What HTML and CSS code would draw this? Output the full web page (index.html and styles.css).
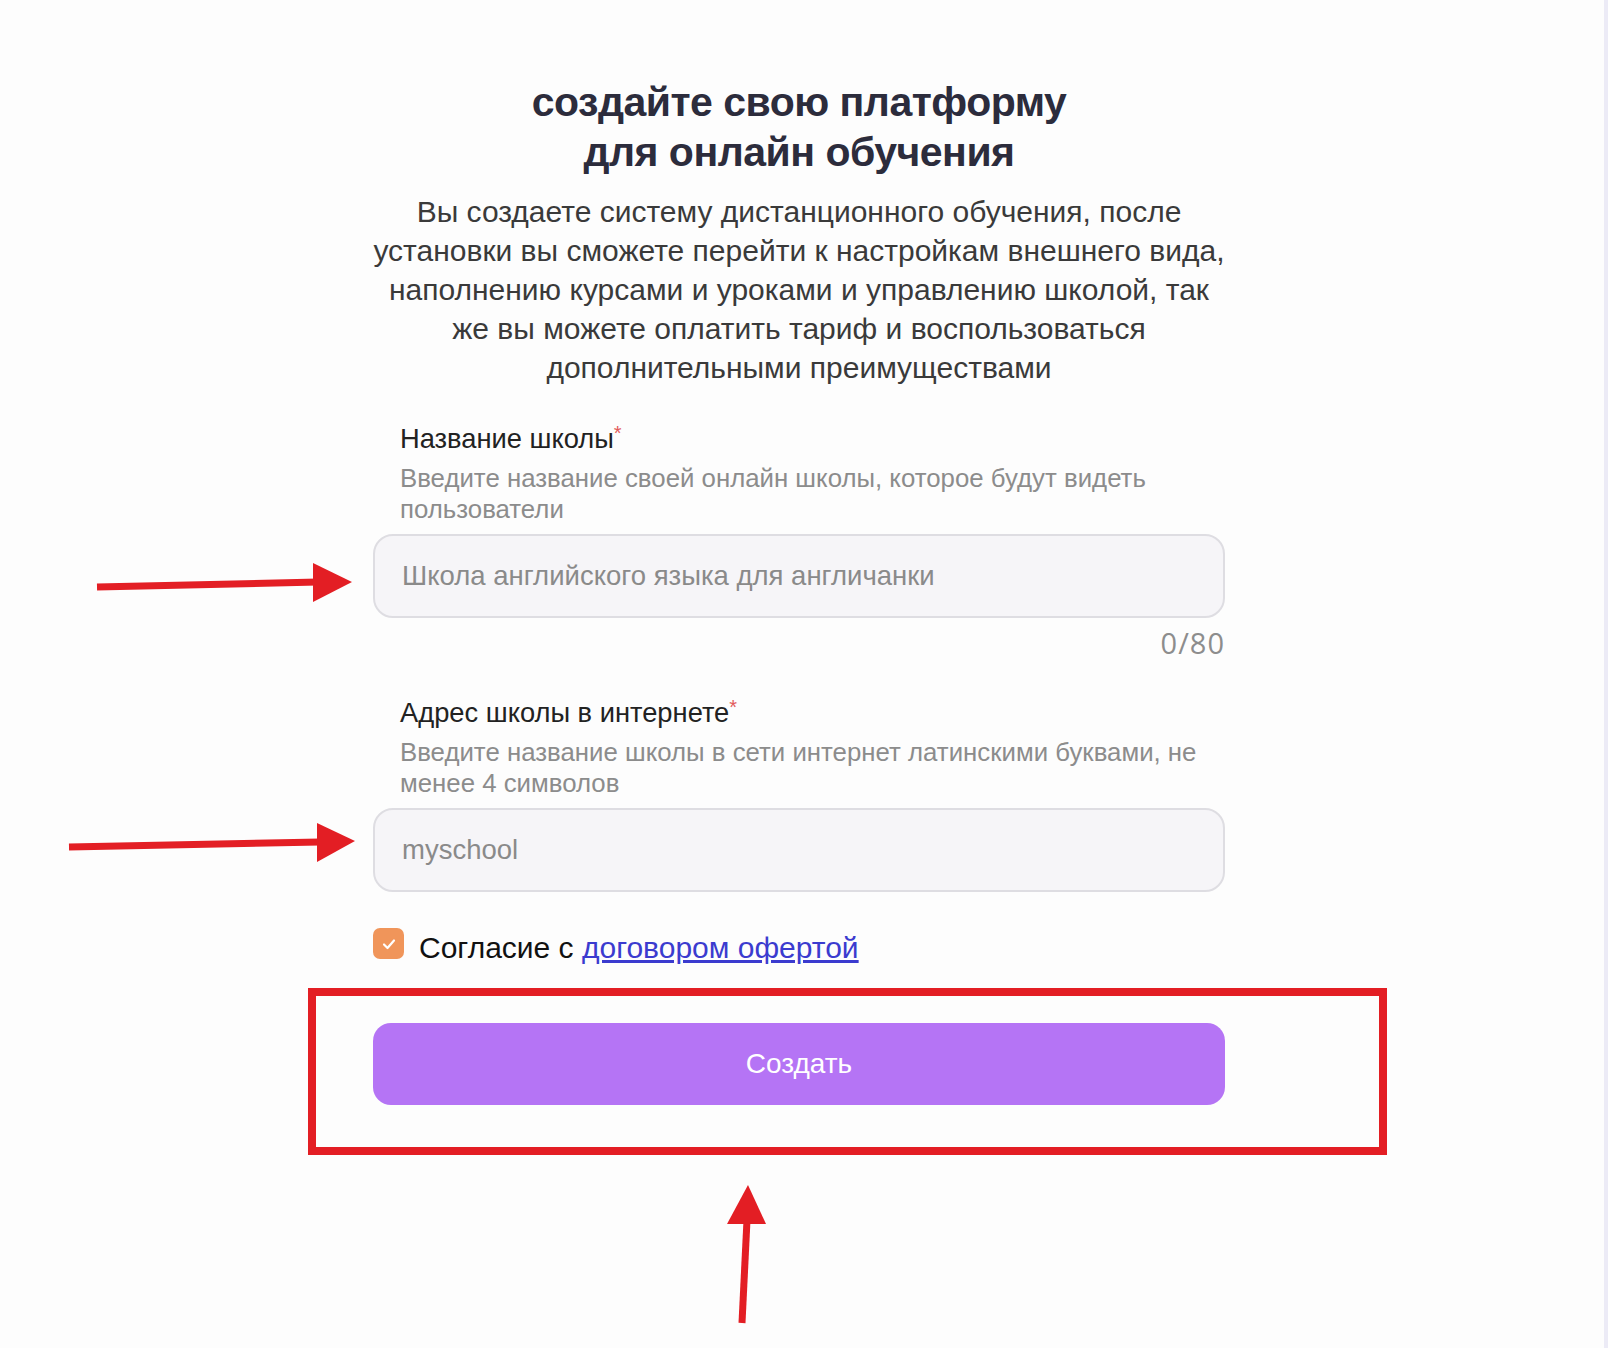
FILE: index.html
```html
<!DOCTYPE html>
<html lang="ru">
<head>
<meta charset="utf-8">
<title>Создайте свою платформу</title>
<link rel="stylesheet" href="styles.css">
</head>
<body>
<main class="page">
  <h1 class="title">создайте свою платформу<br>для онлайн обучения</h1>
  <p class="lead">Вы создаете систему дистанционного обучения, после<br>установки вы сможете перейти к настройкам внешнего вида,<br>наполнению курсами и уроками и управлению школой, так<br>же вы можете оплатить тариф и воспользоваться<br>дополнительными преимуществами</p>

  <div class="field">
    <div class="label">Название школы<span class="req">*</span></div>
    <div class="hint">Введите название своей онлайн школы, которое будут видеть пользователи</div>
    <input class="input" type="text" placeholder="Школа английского языка для англичанки">
    <div class="counter">0/80</div>
  </div>

  <div class="field field-second">
    <div class="label">Адрес школы в интернете<span class="req">*</span></div>
    <div class="hint">Введите название школы в сети интернет латинскими буквами, не менее 4 символов</div>
    <input class="input" type="text" placeholder="myschool">
  </div>

  <div class="agree">
    <span class="check">
      <svg width="16" height="16" viewBox="0 0 16 16"><path d="M3 8.5 L6.5 12 L13 4.5" fill="none" stroke="#fff" stroke-width="2.2" stroke-linecap="round" stroke-linejoin="round"/></svg>
    </span>
    <span class="agree-text">Согласие с <a href="#" class="link">договором офертой</a></span>
  </div>

  <button class="btn" type="button">Создать</button>
</main>

<svg class="annot" width="1608" height="1348" viewBox="0 0 1608 1348">
  <rect x="312" y="992" width="1071" height="159" fill="none" stroke="#e31e24" stroke-width="8"/>
  <line x1="97" y1="587" x2="318" y2="582" stroke="#e31e24" stroke-width="7"/>
  <polygon points="313,563 352,582 313,602" fill="#e31e24"/>
  <line x1="69" y1="847" x2="320" y2="842" stroke="#e31e24" stroke-width="7"/>
  <polygon points="317,823 355,841 317,862" fill="#e31e24"/>
  <line x1="742" y1="1323" x2="747" y2="1220" stroke="#e31e24" stroke-width="7"/>
  <polygon points="727,1224 748,1185 766,1224" fill="#e31e24"/>
</svg>
</body>
</html>
```

FILE: styles.css
```css
* { box-sizing: border-box; }

html, body {
  margin: 0;
  height: 1348px;
  overflow: hidden;
}

body {
  position: relative;
  background: #fdfdfd;
  padding-right: 10px;
  font-family: "Liberation Sans", Arial, sans-serif;
}

body::after {
  content: "";
  position: fixed;
  top: 0;
  right: 0;
  width: 4px;
  height: 100%;
  background: #ecebf6;
}

.page {
  width: 852px;
  margin: 0 auto;
  padding-top: 77px;
}

.title {
  margin: 0;
  font-family: "Liberation Sans", Arial, sans-serif;
  font-weight: 700;
  font-size: 41px;
  line-height: 50px;
  letter-spacing: -0.5px;
  color: #2c2c3c;
  text-align: center;
}

.lead {
  margin: 15px -30px 0;
  font-size: 30px;
  line-height: 39px;
  color: #3a3a3a;
  text-align: center;
}

.field {
  margin-top: 36px;
}

.field-second {
  margin-top: 38px;
}

.label {
  padding-left: 27px;
  font-size: 27.3px;
  line-height: 32px;
  color: #222;
}

.req {
  color: #e25a5a;
  font-size: 20px;
  vertical-align: top;
  line-height: 20px;
}

.hint {
  margin-top: 8px;
  padding-left: 27px;
  font-size: 25.8px;
  line-height: 31px;
  color: #8c8c8c;
}

.input {
  display: block;
  width: 100%;
  height: 84px;
  margin-top: 9px;
  padding: 0 27px;
  border: 2px solid #dedde2;
  border-radius: 20px;
  background: #f6f5f8;
  font-family: "Liberation Sans", Arial, sans-serif;
  font-size: 27.5px;
  color: #333;
  outline: none;
}

.input::placeholder {
  color: #8a8a8a;
}

.counter {
  margin-top: 9px;
  text-align: right;
  font-family: "Open Sans", sans-serif;
  font-size: 29px;
  line-height: 32px;
  letter-spacing: 1px;
  color: #8d8d8d;
}

.agree {
  display: flex;
  align-items: flex-start;
  gap: 15px;
  margin-top: 36px;
}

.check {
  flex: none;
  width: 31px;
  height: 31px;
  border-radius: 7px;
  background: #f0955a;
  display: flex;
  align-items: center;
  justify-content: center;
}

.agree-text {
  margin-top: 4px;
  font-size: 30px;
  line-height: 32px;
  color: #111;
}

.link {
  color: #3b3bcf;
  text-decoration: underline;
}

.btn {
  display: block;
  width: 100%;
  height: 82px;
  margin-top: 59px;
  border: none;
  border-radius: 18px;
  background: #b574f5;
  color: #fff;
  font-family: "Liberation Sans", Arial, sans-serif;
  font-size: 28px;
}

.annot {
  position: absolute;
  top: 0;
  left: 0;
  pointer-events: none;
}
```
